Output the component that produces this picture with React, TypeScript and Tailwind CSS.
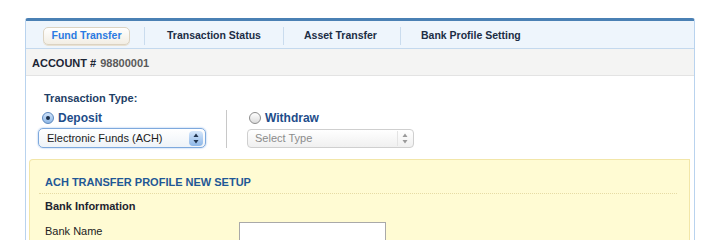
const font = { fontFamily: '"Liberation Sans", Arial, Helvetica, sans-serif' }

function Radio({ checked }: { checked: boolean }): React.JSX.Element {
  return (
    <span
      className={`flex h-[12px] w-[12px] items-center justify-center rounded-full border ${
        checked
          ? 'border-[#5b87bd] bg-gradient-to-b from-[#cfe3fa] to-[#8fb8e6]'
          : 'border-[#8d8d8d] bg-gradient-to-b from-[#ffffff] to-[#dcdcdc]'
      }`}
    >
      {checked && <span className="h-[4px] w-[4px] rounded-full bg-[#1b2f4a]" />}
    </span>
  )
}

function Arrows({ active }: { active: boolean }): React.JSX.Element {
  const c = active ? '#20344f' : '#9a9a9a'
  return (
    <svg width="6" height="11" viewBox="0 0 6 11">
      <path d="M3 0.5 L5.5 4 L0.5 4 Z" fill={c} />
      <path d="M3 10.5 L5.5 7 L0.5 7 Z" fill={c} />
    </svg>
  )
}

export default function App(): React.JSX.Element {
  return (
    <div className="h-[240px] w-[720px] overflow-hidden bg-white" style={font}>
      <div className="ml-[25px] mt-[18px] w-[670px] h-[240px] rounded-t-[3px] border-x border-t-[3px] border-x-[#b9d3ee] border-t-[#4a80b4]">
        {/* tabs */}
        <div className="flex h-[28px] items-center border-b border-[#c4d9ee] bg-[#eef5fc] pt-[2px] text-[10.5px] font-bold text-[#1c2d45]">
          <div className="w-[118px] pl-[17px]">
            <div className="flex h-[18px] w-[87px] items-center justify-center rounded-[5px] border border-[#dcd3c2] bg-gradient-to-b from-white to-[#f2eee4] text-[#2b7be2] shadow-[0_1px_0_#e9e2d2]">
              Fund Transfer
            </div>
          </div>
          <div className="flex h-[18px] w-[139px] items-center border-l border-[#cadcee] pl-[22px]">Transaction Status</div>
          <div className="flex h-[18px] w-[117px] items-center border-l border-[#cadcee] pl-[20px]">Asset Transfer</div>
          <div className="flex h-[18px] items-center border-l border-[#cadcee] pl-[20px]">Bank Profile Setting</div>
        </div>

        {/* account */}
        <div className="flex h-[27px] items-center border-b border-[#e3e3e3] bg-[#f4f4f3] pl-[6px] pt-[2px] text-[11px] font-bold">
          <span className="text-[#1b2535]">ACCOUNT #</span>
          <span className="ml-[4px] text-[#5a5a5a]">98800001</span>
        </div>

        {/* transaction type */}
        <div className="pl-[12px] pt-[15px]">
          <div className="ml-[6px] text-[11px] font-bold leading-[14px] text-[#1f3f66]">Transaction Type:</div>
          <div className="mt-[6px] flex items-start">
            <div className="w-[168px]">
              <label className="ml-[4px] flex h-[14px] items-center gap-[4px] text-[12px] font-bold text-[#1e4d8a]">
                <Radio checked />
                Deposit
              </label>
              <div className="mt-[3px] flex h-[20px] items-center justify-between rounded-[5px] border border-[#7ea9dd] bg-gradient-to-b from-white to-[#eef3f8] pl-[8px] pr-[2px] text-[11px] text-[#1a1a1a] shadow-[0_0_2px_#8fb6ea]">
                <span>Electronic Funds (ACH)</span>
                <span className="flex h-[15px] w-[14px] items-center justify-center rounded-[4px] bg-gradient-to-b from-[#d6e7fb] to-[#8db7e8]">
                  <Arrows active />
                </span>
              </div>
            </div>
            <div className="ml-[20px] mt-[-1px] h-[38px] w-px bg-[#c8c8c8]" />
            <div className="ml-[20px] w-[167px]">
              <label className="ml-[2px] flex h-[14px] items-center gap-[4px] text-[12px] font-bold text-[#1e4d8a]">
                <Radio checked={false} />
                Withdraw
              </label>
              <div className="mt-[4px] flex h-[19px] items-center justify-between rounded-[4px] border border-[#cfcfcf] bg-gradient-to-b from-white to-[#f0f0f0] pl-[7px] pr-[5px] text-[11px] text-[#8c8c8c]">
                <span>Select Type</span>
                <span className="flex h-[15px] items-center border-l border-[#e4e4e4] pl-[4px]">
                  <Arrows active={false} />
                </span>
              </div>
            </div>
          </div>
        </div>

        {/* ACH setup box */}
        <div className="ml-[3px] mr-[4px] mt-[11px] rounded-tl-[4px] border border-b-0 border-[#f2e6a8] bg-[#fffbd3] pb-[20px]">
          <div className="mx-[9px] mr-[12px] border-b border-dotted border-[#e6dba4] pb-[4px] pl-[6px] pt-[15px] text-[11px] font-bold leading-[14px] text-[#1f5896]">
            ACH TRANSFER PROFILE NEW SETUP
          </div>
          <div className="pl-[15px] pt-[5px] text-[11px] font-bold leading-[14px] text-[#1e2430]">Bank Information</div>
          <div className="mt-[9px] flex items-start pl-[15px]">
            <span className="mt-[2px] w-[194px] text-[11px] leading-[14px] text-[#222]">Bank Name</span>
            <input className="h-[22px] w-[147px] border border-[#a9a9a9] bg-white outline-none" />
          </div>
        </div>
      </div>
    </div>
  )
}
